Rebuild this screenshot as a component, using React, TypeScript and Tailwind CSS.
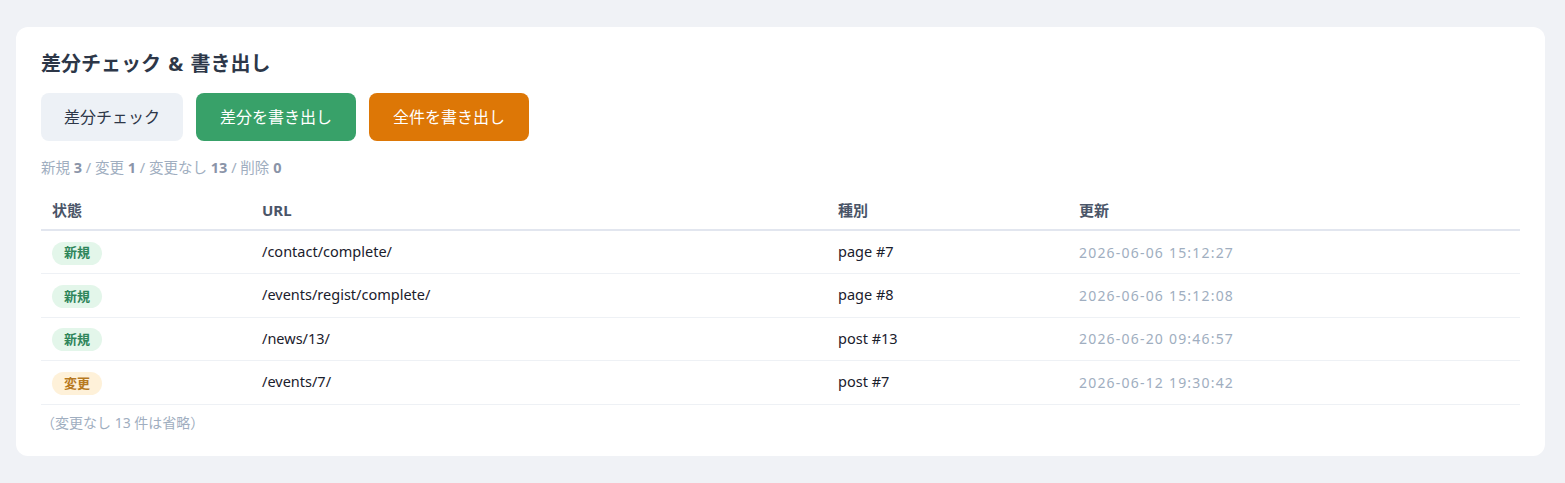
const rows = [
  { status: "new", url: "/contact/complete/", type: "page #7", updated: "2026-06-06 15:12:27" },
  { status: "new", url: "/events/regist/complete/", type: "page #8", updated: "2026-06-06 15:12:08" },
  { status: "new", url: "/news/13/", type: "post #13", updated: "2026-06-20 09:46:57" },
  { status: "changed", url: "/events/7/", type: "post #7", updated: "2026-06-12 19:30:42" },
];

function StatusBadge({ status }: { status: string }) {
  if (status === "changed") {
    return (
      <span className="inline-flex h-[23px] items-center rounded-full bg-[#fef1d9] px-3 text-[13px] font-semibold text-[#b7791f]">
        変更
      </span>
    );
  }
  return (
    <span className="inline-flex h-[23px] items-center rounded-full bg-[#e3f6ea] px-3 text-[13px] font-semibold text-[#2f855a]">
      新規
    </span>
  );
}

export default function App() {
  return (
    <div
      className="min-h-[483px] bg-[#f0f2f6] pl-4 pr-5 pt-[27px] pb-7"
      style={{ fontFamily: '"Noto Sans", "Noto Sans CJK JP", sans-serif' }}
    >
      <div className="rounded-xl bg-white px-[25px] pt-[22px] pb-[23px]">
        <h2 className="text-xl font-bold leading-[30px] text-[#2d3748]">
          差分チェック <span className="px-[2px]">&amp;</span> 書き出し
        </h2>

        {/* Actions */}
        <div className="mt-[14px] flex gap-[13px]">
          <button className="h-12 rounded-lg bg-[#edf1f6] px-[23px] text-base text-[#2d3748]">差分チェック</button>
          <button className="h-12 rounded-lg bg-[#38a169] px-6 text-base text-white">差分を書き出し</button>
          <button className="h-12 rounded-lg bg-[#dd7706] px-6 text-base text-white">全件を書き出し</button>
        </div>

        <div className="mt-[15px] text-[14.5px] leading-[22px] text-[#a0aec0]">
          新規 <b className="text-[#8a94a8]">3</b> / 変更 <b className="text-[#8a94a8]">1</b> / 変更なし{" "}
          <b className="text-[#8a94a8]">13</b> / 削除 <b className="text-[#8a94a8]">0</b>
        </div>

        {/* Table */}
        <table className="mt-[11px] w-full border-collapse text-left">
          <thead>
            <tr className="border-b-2 border-[#e2e6ef]">
              <th className="w-[209px] px-[11px] pt-[10px] pb-[8px] text-[15px] font-bold leading-[22px] text-[#4a5568]">状態</th>
              <th className="w-[576px] px-3 pt-[10px] pb-[8px] text-[15px] font-bold leading-[22px] text-[#4a5568]">URL</th>
              <th className="w-[241px] px-3 pt-[10px] pb-[8px] text-[15px] font-bold leading-[22px] text-[#4a5568]">種別</th>
              <th className="px-3 pt-[10px] pb-[8px] text-[15px] font-bold leading-[22px] text-[#4a5568]">更新</th>
            </tr>
          </thead>
          <tbody>
            {rows.map((r) => (
              <tr key={r.url} className="border-b border-[#eef1f5]">
                <td className="h-[43.5px] px-[11px] align-middle">
                  <StatusBadge status={r.status} />
                </td>
                <td className="px-3 text-[14.5px] text-[#1a202c]">{r.url}</td>
                <td className="px-3 text-[14.5px] text-[#1a202c]">{r.type}</td>
                <td className="px-3 text-[14px] tracking-[1.2px] text-[#a0aec0]">{r.updated}</td>
              </tr>
            ))}
          </tbody>
        </table>

        <div className="mt-[8px] text-[14px] leading-[20px] text-[#a0aec0]">（変更なし 13 件は省略）</div>
      </div>
    </div>
  );
}
